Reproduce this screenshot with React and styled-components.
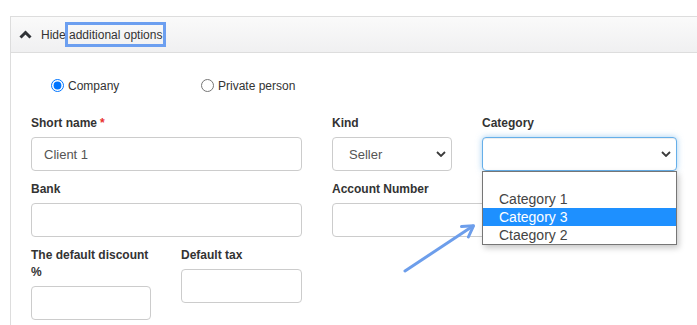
import React from 'react';
import styled, { createGlobalStyle, css } from 'styled-components';

const GlobalStyle = createGlobalStyle`
  body {
    margin: 0;
    background: #fff;
    font-family: "Liberation Sans", Arial, sans-serif;
    color: #333;
  }
`;

const Page = styled.div`
  position: relative;
  height: 325px;
  overflow: hidden;
  padding: 16px 0 0 10px;
  box-sizing: border-box;
`;

const Panel = styled.div`
  width: 720px;
  height: 400px;
  border: 1px solid #ddd;
  border-right: none;
`;

const PanelHeader = styled.div`
  display: flex;
  align-items: center;
  height: 35px;
  padding-left: 8px;
  background: linear-gradient(#fafafa, #f0f0f1);
  border-bottom: 1px solid #ddd;
  font-size: 12px;
  color: #333;
`;

const HeaderText = styled.span`
  margin-left: 9px;
`;

const Marked = styled.span`
  position: relative;
  &::after {
    content: '';
    position: absolute;
    left: -4px;
    right: -4px;
    top: -6px;
    bottom: -5px;
    border: 3px solid #6c9ff0;
  }
`;

const PanelBody = styled.div`
  padding: 24px 0 0 20px;
`;

const RadioRow = styled.div`
  display: flex;
  align-items: center;
  height: 17px;
  padding-left: 20px;
  font-size: 12px;
`;

const RadioLabel = styled.label`
  display: flex;
  align-items: center;
  gap: 4px;
  width: 150px;
  input {
    margin: 0;
    width: 13px;
    height: 13px;
  }
`;

const FormGrid = styled.div`
  display: grid;
  grid-template-columns: 271px 120px 195px;
  column-gap: 30px;
  row-gap: 9px;
  margin-top: 20px;
  align-items: start;
`;

const SubGrid = styled.div`
  display: grid;
  grid-template-columns: 120px 121px;
  column-gap: 30px;
  align-items: start;
`;

const Field = styled.div`
  display: flex;
  flex-direction: column;
  position: relative;
  grid-column: ${p => p.$span || 'auto'};
`;

const Label = styled.div`
  font-size: 12px;
  font-weight: bold;
  line-height: 17px;
  padding-top: 1px;
  margin-bottom: 5px;
  color: #333;
`;

const Star = styled.span`
  color: #e8302f;
  margin-left: 3px;
`;

const boxBase = css`
  box-sizing: border-box;
  height: 34px;
  border: 1px solid #ccc;
  border-radius: 4px;
  background: #fff;
  font-family: "Liberation Sans", Arial, sans-serif;
  font-size: 13px;
  color: #555;
`;

const Input = styled.input`
  ${boxBase};
  width: 100%;
  padding: 0 12px;
  outline: none;
`;

const SelectBox = styled.div`
  ${boxBase};
  display: flex;
  align-items: center;
  justify-content: space-between;
  padding: 0 5px 0 16px;
  ${p =>
    p.$focused &&
    css`
      border-color: #66afe9;
      box-shadow: inset 0 1px 1px rgba(0, 0, 0, 0.075), 0 0 6px rgba(102, 175, 233, 0.6);
    `}
`;

const Dropdown = styled.ul`
  position: absolute;
  top: 100%;
  left: 0;
  width: 195px;
  margin: 0;
  padding: 0;
  list-style: none;
  box-sizing: border-box;
  background: #fff;
  border: 1px solid #767676;
  box-shadow: 2px 3px 6px rgba(0, 0, 0, 0.22);
  z-index: 2;
`;

const Option = styled.li`
  height: 18px;
  line-height: 18px;
  padding-left: 16px;
  font-size: 14px;
  color: ${p => (p.$active ? '#fff' : '#444')};
  background: ${p => (p.$active ? '#1e90ff' : 'transparent')};
`;

const Arrow = styled.svg`
  position: absolute;
  left: 396px;
  top: 216px;
  pointer-events: none;
`;

const ChevronUp = () => (
  <svg width="13" height="9" viewBox="0 0 13 9">
    <path d="M1.5 7.5 L6.5 2.5 L11.5 7.5" fill="none" stroke="#2f3236" strokeWidth="3" />
  </svg>
);

const ChevronDown = () => (
  <svg width="10" height="6" viewBox="0 0 10 6">
    <path d="M1 1 L5 5 L9 1" fill="none" stroke="#3a3a3a" strokeWidth="1.8" />
  </svg>
);

export default function App() {
  return (
    <Page>
      <GlobalStyle />
      <Panel>
        <PanelHeader>
          <ChevronUp />
          <HeaderText>
            Hide <Marked>additional options</Marked>
          </HeaderText>
        </PanelHeader>
        <PanelBody>
          <RadioRow>
            <RadioLabel>
              <input type="radio" name="type" defaultChecked />
              Company
            </RadioLabel>
            <RadioLabel>
              <input type="radio" name="type" />
              Private person
            </RadioLabel>
          </RadioRow>
          <FormGrid>
            <Field>
              <Label>
                Short name<Star>*</Star>
              </Label>
              <Input defaultValue="Client 1" />
            </Field>
            <Field>
              <Label>Kind</Label>
              <SelectBox>
                Seller
                <ChevronDown />
              </SelectBox>
            </Field>
            <Field>
              <Label>Category</Label>
              <Field>
                <SelectBox $focused>
                  <span />
                  <ChevronDown />
                </SelectBox>
                <Dropdown>
                  <Option />
                  <Option>Category 1</Option>
                  <Option $active>Category 3</Option>
                  <Option>Ctaegory 2</Option>
                </Dropdown>
              </Field>
            </Field>
            <Field>
              <Label>Bank</Label>
              <Input />
            </Field>
            <Field $span="2 / 4">
              <Label>Account Number</Label>
              <Input />
            </Field>
            <SubGrid>
              <Field>
                <Label>The default discount %</Label>
                <Input />
              </Field>
              <Field>
                <Label>Default tax</Label>
                <Input />
              </Field>
            </SubGrid>
          </FormGrid>
        </PanelBody>
      </Panel>
      <Arrow width="90" height="65" viewBox="396 216 90 65">
        <g fill="none" stroke="#6d9eeb" strokeWidth="3" strokeLinecap="round" strokeLinejoin="round">
          <path d="M405 271 L473 226" />
          <path d="M461.5 226.6 L473.5 225.8 L468.4 237" />
        </g>
      </Arrow>
    </Page>
  );
}
